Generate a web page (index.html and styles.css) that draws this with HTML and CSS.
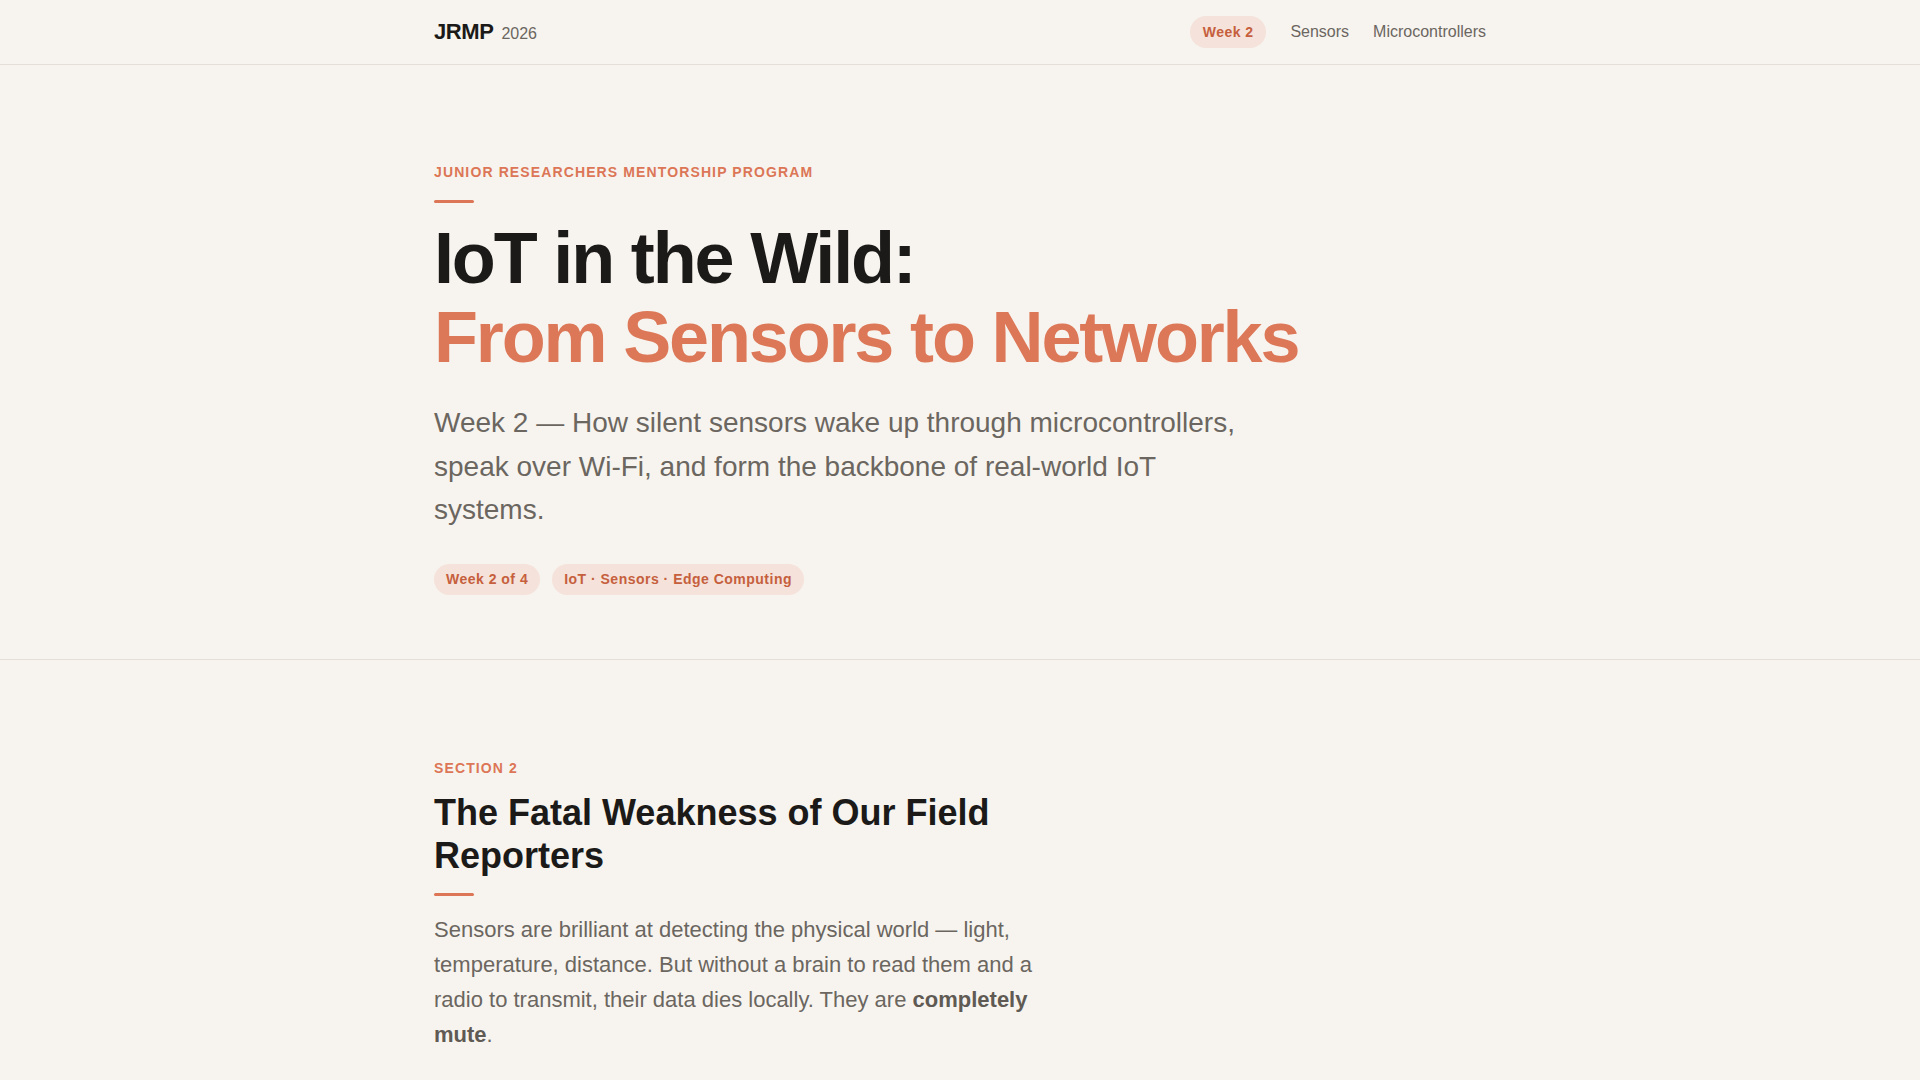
FILE: index.html
```html
<!DOCTYPE html>
<html lang="en">
<head>
<meta charset="utf-8">
<title>IoT in the Wild — JRMP 2026</title>
<link rel="stylesheet" href="styles.css">
</head>
<body>
<header class="site-header">
  <div class="container header-inner">
    <div class="brand"><span class="brand-name">JRMP</span><span class="brand-year">2026</span></div>
    <nav class="nav">
      <a class="nav-link nav-active" href="#">Week 2</a>
      <a class="nav-link" href="#">Sensors</a>
      <a class="nav-link" href="#">Microcontrollers</a>
    </nav>
  </div>
</header>
<main>
  <section class="hero">
    <div class="container">
      <p class="eyebrow">Junior Researchers Mentorship Program</p>
      <div class="rule hero-rule"></div>
      <h1 class="hero-title">IoT in the Wild:<br><span class="accent">From Sensors to Networks</span></h1>
      <p class="hero-sub">Week 2 — How silent sensors wake up through microcontrollers, speak over Wi-Fi, and form the backbone of real-world IoT systems.</p>
      <div class="tags">
        <span class="tag">Week 2 of 4</span>
        <span class="tag">IoT · Sensors · Edge Computing</span>
      </div>
    </div>
  </section>
  <section class="section">
    <div class="container">
      <div class="section-body">
        <p class="eyebrow section-eyebrow">Section 2</p>
        <h2 class="section-title">The Fatal Weakness of Our Field Reporters</h2>
        <div class="rule section-rule"></div>
        <p class="section-text">Sensors are brilliant at detecting the physical world — light, temperature, distance. But without a brain to read them and a radio to transmit, their data dies locally. They are <strong>completely mute</strong>.</p>
      </div>
    </div>
  </section>
</main>
</body>
</html>
```
FILE: styles.css
```css
* { box-sizing: border-box; }
html, body { margin: 0; padding: 0; }
body {
  background: #f7f4ef;
  color: #1b1a18;
  font-family: "Liberation Sans", Arial, Helvetica, sans-serif;
}
.container {
  max-width: 1100px;
  margin: 0 auto;
  padding: 0 24px;
}
.site-header {
  border-bottom: 1px solid #e4dfd7;
}
.header-inner {
  height: 64px;
  display: flex;
  align-items: center;
  justify-content: space-between;
}
.brand {
  display: flex;
  align-items: baseline;
  gap: 8px;
}
.brand-name {
  font-size: 22px;
  font-weight: 700;
  letter-spacing: -0.02em;
  color: #1b1a18;
}
.brand-year {
  font-size: 16px;
  color: #6b665f;
}
.nav {
  display: flex;
  align-items: center;
  gap: 24px;
}
.nav-link {
  font-size: 16px;
  color: #6b665f;
  text-decoration: none;
  line-height: 20px;
}
.nav-active {
  font-size: 14px;
  font-weight: 700;
  letter-spacing: 0.03em;
  line-height: 18px;
  padding: 7px 13px;
  border-radius: 999px;
  background: #f5e2da;
  color: #c65f3d;
}
.hero {
  padding: 97px 0 64px;
  border-bottom: 1px solid #e4dfd7;
}
.eyebrow {
  margin: 0;
  font-size: 14px;
  line-height: 21px;
  font-weight: 700;
  letter-spacing: 0.08em;
  text-transform: uppercase;
  color: #dc7656;
}
.rule {
  width: 40px;
  height: 3px;
  border-radius: 2px;
  background: #dc7656;
}
.hero-rule {
  margin: 17px 0 16px;
}
.hero-title {
  margin: 0;
  font-size: 72px;
  line-height: 1.1;
  font-weight: 700;
  letter-spacing: -0.03em;
  color: #1b1a18;
}
.accent {
  color: #dc7858;
}
.hero-sub {
  margin: 24px 0 0;
  max-width: 820px;
  font-size: 28px;
  line-height: 1.55;
  color: #6b665f;
}
.tags {
  display: flex;
  gap: 12px;
  margin-top: 32px;
}
.tag {
  font-size: 14px;
  font-weight: 700;
  letter-spacing: 0.035em;
  line-height: 17px;
  padding: 7px 12px;
  border-radius: 999px;
  background: #f5e2da;
  color: #c65f3d;
}
.section {
  padding: 98px 0 96px;
}
.section-body {
  max-width: 640px;
}
.section-title {
  margin: 12px 0 0;
  font-size: 36px;
  line-height: 1.2;
  font-weight: 700;
  color: #1b1a18;
}
.section-rule {
  margin: 16px 0 16px;
}
.section-text {
  margin: 0;
  font-size: 22px;
  line-height: 1.6;
  color: #6b665f;
}
.section-text strong {
  font-weight: 700;
  color: #5f5a53;
}
```
